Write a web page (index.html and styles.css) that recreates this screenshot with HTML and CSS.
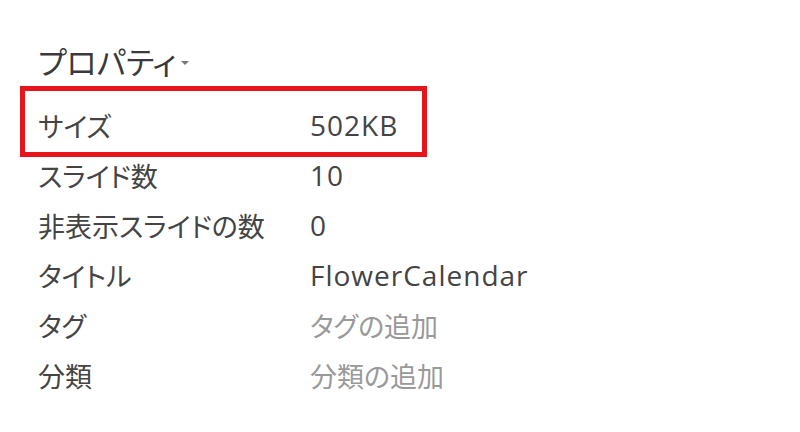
FILE: index.html
```html
<!DOCTYPE html>
<html lang="ja">

<head>
    <meta charset="UTF-8">
    <meta name="viewport" content="width=device-width, initial-scale=1.0">
    <title>プロパティ</title>
    <link rel="stylesheet" href="styles.css">
</head>

<body>
    <div class="props">
        <h2 class="props-title">プロパティ<span class="caret"></span></h2>
        <div class="row marked">
            <span class="label">サイズ</span>
            <span class="value">502KB</span>
        </div>
        <div class="row">
            <span class="label">スライド数</span>
            <span class="value">10</span>
        </div>
        <div class="row">
            <span class="label">非表示スライドの数</span>
            <span class="value">0</span>
        </div>
        <div class="row">
            <span class="label">タイトル</span>
            <span class="value">FlowerCalendar</span>
        </div>
        <div class="row">
            <span class="label">タグ</span>
            <span class="value empty">タグの追加</span>
        </div>
        <div class="row">
            <span class="label">分類</span>
            <span class="value empty">分類の追加</span>
        </div>
    </div>
</body>

</html>
```

FILE: styles.css
```css
body {
    margin: 0;
    background: #fff;
    color: #444;
    font-family: "Open Sans", "Noto Sans CJK JP", sans-serif;
}

.props {
    padding: 40px 0 0 38px;
}

.props-title {
    margin: 0 0 16px;
    height: 44px;
    line-height: 44px;
    font-size: 31px;
    font-weight: normal;
    font-feature-settings: "palt";
    color: #3a3a3a;
    display: flex;
    align-items: center;
}

/* 小さい下向き三角 */
.caret {
    margin-left: 5px;
    margin-top: 2px;
    border-left: 4px solid transparent;
    border-right: 4px solid transparent;
    border-top: 4px solid #777;
}

.row {
    display: flex;
    align-items: center;
    height: 50px;
}

.label {
    width: 272px;
    font-size: 27px;
    font-feature-settings: "palt";
}

.value {
    font-size: 28px;
    letter-spacing: 1px;
}

.value.empty {
    font-size: 27px;
    letter-spacing: 0;
    color: #999;
    font-feature-settings: "palt";
}

/* 赤枠の強調 */
.marked {
    position: relative;
}

.marked::before {
    content: "";
    position: absolute;
    top: -14px;
    bottom: -7px;
    left: -18px;
    width: 407px;
    box-sizing: border-box;
    border: 5px solid #e8141b;
}
```
